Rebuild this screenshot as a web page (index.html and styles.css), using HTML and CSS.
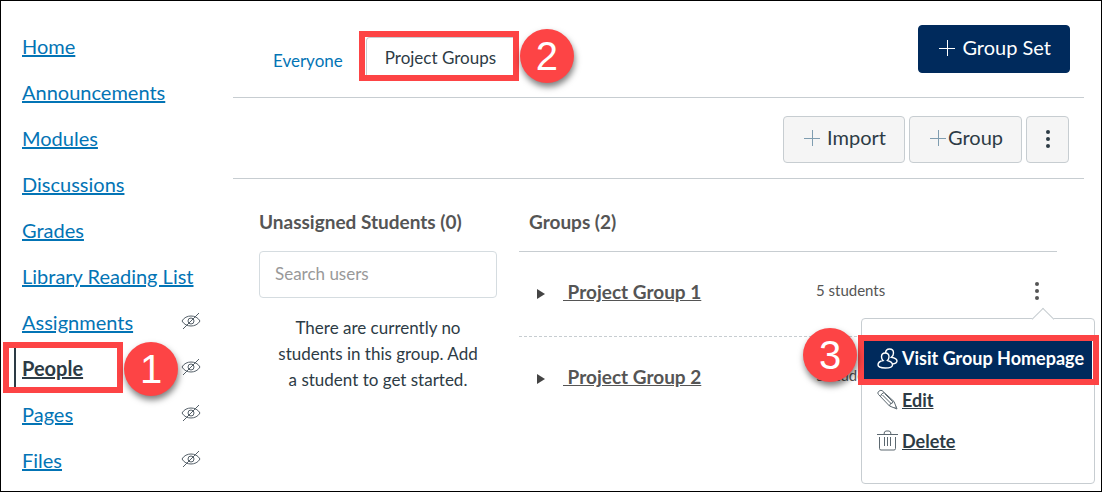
FILE: index.html
```html
<!DOCTYPE html>
<html lang="en">
<head>
    <meta charset="UTF-8">
    <meta name="viewport" content="width=device-width, initial-scale=1.0">
    <title>People</title>
    <link rel="stylesheet" href="styles.css">
</head>
<body>
    <!-- shared icons -->
    <svg class="sprite" aria-hidden="true">
        <symbol id="hidden-eye" viewBox="0 0 20 18">
            <path d="M1 9C3 5.500 6.500 4 10 4s7 1.500 9 5c-2 3.500-5.500 5-9 5S3 12.500 1 9z"/>
            <circle cx="10" cy="9" r="3"/>
            <path d="M2 17L18 1"/>
        </symbol>
        <symbol id="plus" viewBox="0 0 16 16">
            <path d="M8.500 0v16M0 8.500h16"/>
        </symbol>
        <symbol id="dots" viewBox="0 0 4 18">
            <circle cx="2" cy="2" r="2"/>
            <circle cx="2" cy="9" r="2"/>
            <circle cx="2" cy="16" r="2"/>
        </symbol>
    </svg>

    <div class="page">
        <nav class="sidebar">
            <ul>
                <li><a href="#">Home</a></li>
                <li><a href="#">Announcements</a></li>
                <li><a href="#">Modules</a></li>
                <li><a href="#">Discussions</a></li>
                <li><a href="#">Grades</a></li>
                <li><a href="#">Library Reading List</a></li>
                <li><a href="#">Assignments</a><svg class="eye"><use href="#hidden-eye"/></svg></li>
                <li class="active">
                    <a href="#">People</a><svg class="eye"><use href="#hidden-eye"/></svg>
                    <span class="mark mark-people"></span>
                    <span class="step step-1">1</span>
                </li>
                <li><a href="#">Pages</a><svg class="eye"><use href="#hidden-eye"/></svg></li>
                <li><a href="#">Files</a><svg class="eye"><use href="#hidden-eye"/></svg></li>
            </ul>
        </nav>

        <main class="content">
            <header class="tabs">
                <a class="tab" href="#">Everyone</a>
                <div class="tab-wrap">
                    <a class="tab tab-active" href="#">Project Groups</a>
                    <span class="mark mark-tab"></span>
                    <span class="step step-2">2</span>
                </div>
                <button type="button" class="btn btn-primary"><svg class="plus"><use href="#plus"/></svg>Group Set</button>
            </header>

            <div class="toolbar">
                <button type="button" class="btn"><svg class="plus"><use href="#plus"/></svg>Import</button>
                <button type="button" class="btn btn-group"><svg class="plus"><use href="#plus"/></svg>Group</button>
                <button type="button" class="btn btn-dots" aria-label="More options"><svg class="dots"><use href="#dots"/></svg></button>
            </div>

            <div class="columns">
                <section class="unassigned">
                    <h2>Unassigned Students (0)</h2>
                    <input type="text" aria-label="Search users" placeholder="Search users">
                    <p>There are currently no students in this group. Add a student to get started.</p>
                </section>

                <section class="groups">
                    <h2>Groups (2)</h2>
                    <ul>
                        <li class="group">
                            <svg class="arrow" viewBox="0 0 8 10"><path d="M0 0l8 5-8 5z"/></svg>
                            <a href="#">&nbsp;Project Group 1</a>
                            <span class="count">5 students</span>
                            <div class="options">
                                <button type="button" class="kebab" aria-label="Group options"><svg class="dots"><use href="#dots"/></svg></button>
                                <div class="menu">
                                    <a class="visit" href="#">
                                        <svg viewBox="0 0 21 21">
                                            <path d="M6 12.500C4.800 11.500 4.500 10.300 4.500 8.800c0-2.300 1.500-3.800 3.700-3.800S12 6.500 12 8.800c0 1.500-.4 2.700-1.500 3.700 3 .8 5 2.300 5 4.500 0 1.800-3 3-7.200 3S1 18.800 1 17c0-2.200 2-3.900 5-4.500z"/>
                                            <path d="M8.500 5C8.700 2.500 10.300 1 12.500 1c2.400 0 4 1.600 4 3.900 0 1.800-.7 3.200-2.200 4.300 3 .5 5.700 1.700 5.700 3.800 0 1.500-1.700 2.600-4.700 3"/>
                                        </svg>
                                        <span>Visit Group Homepage</span>
                                    </a>
                                    <a href="#">
                                        <svg viewBox="0 0 21 21">
                                            <path d="M1.500 5.500Q0 4 1.500 2.500T5 1.500L17 12.500 20 20l-7.500-3z"/>
                                            <path d="M3.500 7.500Q4 4.500 7 3.500M5.500 6l9 9M7.500 4.500l8 8M12.500 17l1-2.500 2-.5.500-2M17.500 19l1.500-1.500"/>
                                        </svg>
                                        <span>Edit</span>
                                    </a>
                                    <a href="#">
                                        <svg viewBox="0 0 21 21">
                                            <path d="M0 4.500h21M7 4.500q0-3.500 2-3.500h3q2 0 2 3.500M2.500 7v11.500q0 1.500 1.500 1.500h13q1.500 0 1.500-1.500V7M7.500 7v9M10.500 7v9M13.500 7v9"/>
                                        </svg>
                                        <span>Delete</span>
                                    </a>
                                    <span class="mark mark-visit"></span>
                                    <span class="step step-3">3</span>
                                </div>
                            </div>
                        </li>
                        <li class="group">
                            <svg class="arrow" viewBox="0 0 8 10"><path d="M0 0l8 5-8 5z"/></svg>
                            <a href="#">&nbsp;Project Group 2</a>
                            <span class="count">5 students</span>
                        </li>
                    </ul>
                </section>
            </div>
        </main>
    </div>
</body>
</html>
```

FILE: styles.css
```css
*{
    box-sizing: border-box;
}
body{
    margin: 0;
    font-family: Lato, "Liberation Sans", sans-serif;
    font-size: 17px;
    color: #2d3b45;
    background-color: #fff;
}
ul{
    list-style: none;
    margin: 0;
    padding: 0;
}
svg{
    fill: none;
    stroke: currentColor;
    flex: none;
}
.sprite{
    display: none;
}
.page{
    display: flex;
    min-height: 100vh;
    border: 1px solid #000;
}

/* course navigation */
.sidebar{
    width: 232px;
    padding: 22px 32px 0 13px;
    flex: none;
}
.sidebar li{
    position: relative;
    display: flex;
    align-items: center;
    justify-content: space-between;
    height: 46px;
    padding-left: 8px;
    font-size: 20px;
}
.sidebar a{
    color: #0374b5;
}
.sidebar .active::before{
    content: "";
    position: absolute;
    left: 0;
    top: 0;
    bottom: 0;
    width: 2px;
    background-color: #2d3b45;
}
.sidebar .active a{
    color: #2d3b45;
    font-weight: bold;
}
.eye{
    width: 20px;
    height: 18px;
    margin-bottom: 2px;
    color: #556069;
}

/* tabs */
.content{
    flex: 1;
    margin-right: 17px;
}
.tabs{
    display: flex;
    align-items: center;
    height: 97px;
    padding: 20px 14px 0 20px;
    border-bottom: 1px solid #c7cdd1;
}
.tab{
    display: block;
    padding: 20px 23px 18px 20px;
    color: #0374b5;
    text-decoration: none;
}
.tab-wrap{
    position: relative;
}
.tab-active{
    padding: 9px 20px 13px 18px;
    border: 1px solid #c7cdd1;
    border-bottom: 0;
    border-radius: 4px 4px 0 0;
    color: #2d3b45;
}
.btn{
    display: flex;
    align-items: center;
    gap: 7px;
    height: 47px;
    padding: 0 18px 4px 20px;
    border: 1px solid #c7cdd1;
    border-radius: 4px;
    background-color: #f5f5f5;
    color: #2d3b45;
    font-family: inherit;
    font-size: 20px;
}
.btn-primary{
    height: 48px;
    margin: 0 0 20px auto;
    border-color: #002a5c;
    background-color: #002a5c;
    color: #fff;
}
.btn-group{
    gap: 2px;
}
.btn-dots{
    width: 43px;
    padding: 0;
    justify-content: center;
}
.plus{
    width: 16px;
    height: 16px;
    margin-top: 2px;
}
.toolbar .plus{
    color: #7f9db0;
}
.dots{
    width: 4px;
    height: 18px;
    fill: currentColor;
    stroke: none;
}
.toolbar{
    display: flex;
    justify-content: flex-end;
    align-items: center;
    gap: 4px;
    height: 81px;
    padding: 2px 15px 0 0;
    border-bottom: 1px solid #c7cdd1;
}

/* student and group columns */
.columns{
    display: flex;
    gap: 22px;
    padding: 31px 27px 0 26px;
}
h2{
    margin: 0;
    font-size: 19px;
    line-height: 24px;
    color: #555;
}
.unassigned{
    width: 238px;
    flex: none;
}
.unassigned input{
    display: block;
    width: 100%;
    height: 47px;
    margin-top: 17px;
    padding: 0 15px 2px;
    border: 1px solid #d5dce0;
    border-radius: 4px;
    font-family: inherit;
    font-size: 17px;
}
.unassigned input::placeholder{
    color: #999;
}
.unassigned p{
    margin: 17px 14px 0;
    line-height: 26px;
    text-align: center;
}
.groups{
    flex: 1;
}
.groups h2{
    padding: 0 10px 17px;
}
.groups ul{
    border-top: 1px solid #c7cdd1;
}
.group{
    display: flex;
    align-items: center;
    height: 85px;
    padding: 0 12px 6px 18px;
    border-bottom: 1px dashed #c7cdd1;
    color: #555;
}
.group:last-child{
    border-bottom-color: transparent;
}
.group > a{
    flex: 1;
    color: #555;
    font-size: 19px;
    font-weight: bold;
}
.arrow{
    width: 8px;
    height: 10px;
    margin: 6px 18px 0 0;
    fill: #444;
    stroke: none;
}
.count{
    width: 229px;
    padding-bottom: 2px;
    font-size: 15px;
}
.group:first-child .count{
    width: 213px;
}
.options{
    position: relative;
    width: 16px;
}
.kebab{
    display: flex;
    align-items: center;
    justify-content: center;
    width: 100%;
    height: 24px;
    padding: 0;
    border: 0;
    background: none;
    color: #555;
}
.menu{
    position: absolute;
    top: 39px;
    right: -50px;
    width: 234px;
    height: 166px;
    padding: 22px 2px;
    border: 1px solid #c7cdd1;
    border-radius: 4px;
    background-color: #fff;
}
.menu::before{
    content: "";
    position: absolute;
    top: -8px;
    right: 43px;
    width: 15px;
    height: 15px;
    border: 1px solid #c7cdd1;
    border-right: 0;
    border-bottom: 0;
    background-color: #fff;
    transform: rotate(45deg);
}
.menu a{
    display: flex;
    align-items: center;
    gap: 4px;
    height: 41px;
    padding-left: 13px;
    color: #2d3b45;
    font-weight: bold;
    font-size: 18px;
    text-decoration: none;
    white-space: nowrap;
}
.menu a span{
    text-decoration: underline;
}
.menu svg{
    width: 21px;
    height: 21px;
    color: #5c6870;
}
.menu .visit{
    height: 38px;
    padding-bottom: 4px;
    color: #fff;
    background-color: #002a5c;
}
.menu .visit span{
    text-decoration: none;
}
.menu .visit svg{
    color: #fff;
    stroke-width: 1.4;
}

/* walkthrough marks */
.mark{
    position: absolute;
    border: 6px solid #fd4445;
}
.mark-people{
    left: -11px;
    top: -3px;
    width: 120px;
    height: 51px;
}
.mark-tab{
    left: -7px;
    top: -6px;
    width: 160px;
    height: 50px;
}
.mark-visit{
    left: -4px;
    top: 16px;
    width: 241px;
    height: 50px;
}
.step{
    position: absolute;
    width: 54px;
    height: 54px;
    border-radius: 50%;
    background-color: #fd4445;
    box-shadow: 1px 4px 6px rgba(0, 0, 0, 0.5);
    color: #fff;
    font-family: "Liberation Sans", Arial, sans-serif;
    font-size: 40px;
    line-height: 54px;
    text-align: center;
}
.step-1{
    left: 110px;
    top: -3px;
}
.step-2{
    left: 154px;
    top: -8px;
}
.step-3{
    left: -59px;
    top: 9px;
}
```
